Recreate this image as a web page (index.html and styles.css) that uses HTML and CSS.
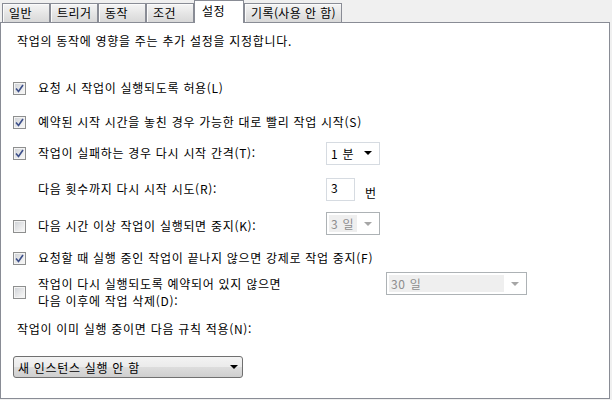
FILE: index.html
```html
<!DOCTYPE html>
<html lang="ko">
<head>
    <meta charset="utf-8">
    <title>작업 속성 - 설정</title>
    <link rel="stylesheet" href="styles.css">
</head>
<body>
    <div class="tabs">
        <div class="tab">일반</div>
        <div class="tab">트리거</div>
        <div class="tab">동작</div>
        <div class="tab">조건</div>
        <div class="tab active">설정</div>
        <div class="tab">기록(사용 안 함)</div>
    </div>

    <div class="panel">
        <p class="desc">작업의 동작에 영향을 주는 추가 설정을 지정합니다.</p>

        <div class="row r1">
            <span class="check on"><svg width="9" height="9" viewBox="0 0 9 9"><path d="M1 4.5 L3.5 7.5 L8 1" fill="none" stroke="#3c4f8a" stroke-width="1.6"/></svg></span>
            <span class="label">요청 시 작업이 실행되도록 허용(L)</span>
        </div>

        <div class="row r2">
            <span class="check on"><svg width="9" height="9" viewBox="0 0 9 9"><path d="M1 4.5 L3.5 7.5 L8 1" fill="none" stroke="#3c4f8a" stroke-width="1.6"/></svg></span>
            <span class="label">예약된 시작 시간을 놓친 경우 가능한 대로 빨리 작업 시작(S)</span>
        </div>

        <div class="row r3">
            <span class="check on"><svg width="9" height="9" viewBox="0 0 9 9"><path d="M1 4.5 L3.5 7.5 L8 1" fill="none" stroke="#3c4f8a" stroke-width="1.6"/></svg></span>
            <span class="label wide">작업이 실패하는 경우 다시 시작 간격(T):</span>
            <div class="combo small">
                <span class="value">1 분</span>
                <span class="arrow"></span>
            </div>
        </div>

        <div class="row r4 indent">
            <span class="label wide">다음 횟수까지 다시 시작 시도(R):</span>
            <div class="textbox">3</div>
            <span class="unit">번</span>
        </div>

        <div class="row r5 bottom">
            <span class="check"></span>
            <span class="label wide">다음 시간 이상 작업이 실행되면 중지(K):</span>
            <div class="combo small disabled">
                <span class="value">3 일</span>
                <span class="arrow"></span>
            </div>
        </div>

        <div class="row r6">
            <span class="check on"><svg width="9" height="9" viewBox="0 0 9 9"><path d="M1 4.5 L3.5 7.5 L8 1" fill="none" stroke="#3c4f8a" stroke-width="1.6"/></svg></span>
            <span class="label">요청할 때 실행 중인 작업이 끝나지 않으면 강제로 작업 중지(F)</span>
        </div>

        <div class="row r7">
            <span class="check"></span>
            <span class="label two-line">작업이 다시 실행되도록 예약되어 있지 않으면<br>다음 이후에 작업 삭제(D):</span>
            <div class="combo large disabled">
                <span class="value">30 일</span>
                <span class="arrow"></span>
            </div>
        </div>

        <div class="row r8">
            <span class="label">작업이 이미 실행 중이면 다음 규칙 적용(N):</span>
        </div>

        <div class="dropdown">
            <span class="value">새 인스턴스 실행 안 함</span>
            <span class="arrow"></span>
        </div>
    </div>
</body>
</html>
```

FILE: styles.css
```css
body {
    margin: 0;
    width: 612px;
    height: 400px;
    background-color: #f0f0f0;
    font-family: "Noto Sans CJK KR", "Noto Sans", sans-serif;
    font-size: 12px;
    letter-spacing: 0.7px;
    color: #000;
    overflow: hidden;
}

/* tab strip */
.tabs {
    display: flex;
    align-items: flex-end;
    height: 22px;
    padding-left: 2px;
}

.tab {
    box-sizing: border-box;
    height: 19px;
    min-width: 48px;
    padding: 0 5px 0 6px;
    border: 1px solid #898c95;
    border-bottom: none;
    background: linear-gradient(#f5f5f5, #e6e6e6 50%, #d8d8d8);
    box-shadow: inset 1px 1px 0 #fbfbfb;
    line-height: 17px;
    letter-spacing: 0.4px;
    white-space: nowrap;
}

.tab.active {
    position: relative;
    z-index: 1;
    height: 23px;
    min-width: 50px;
    margin-bottom: -1px;
    padding-left: 7px;
    background: #fff;
    box-shadow: none;
    line-height: 19px;
}

/* page */
.panel {
    box-sizing: border-box;
    width: 610px;
    height: 377px;
    padding: 6px 0 0 12px;
    border: 1px solid #898c95;
    background-color: #fff;
}

.desc {
    margin: 0;
    height: 24px;
    padding-left: 4px;
    line-height: 24px;
}

.row {
    display: flex;
    align-items: center;
    height: 24px;
}

.row.bottom {
    align-items: flex-end;
}

.r1 { margin-top: 23px; }
.r2 { margin-top: 10px; }
.r3 { margin-top: 7px; }
.r4 { margin-top: 12px; }
.r5 { margin-top: 10px; }
.r6 { margin-top: 11px; }
.r7 { margin-top: 2px; height: 40px; }
.r8 { margin-top: 5px; padding-left: 4px; }

.indent {
    padding-left: 25px;
}

.label {
    line-height: 16px;
    white-space: nowrap;
}

.label.wide {
    width: 288px;
}

.label.two-line {
    width: 348px;
    line-height: 17px;
}

.row.bottom .label {
    margin-bottom: 1px;
}

/* checkbox */
.check {
    box-sizing: border-box;
    display: flex;
    align-items: center;
    justify-content: center;
    flex-shrink: 0;
    width: 13px;
    height: 13px;
    margin-right: 12px;
    border: 1px solid #8e8f8f;
    background: linear-gradient(135deg, #cdd0d5, #f3f3f3 80%);
    box-shadow: inset 0 0 0 1px #f4f4f4;
}

.row.bottom .check {
    margin-bottom: 2px;
}

/* combo boxes */
.combo {
    box-sizing: border-box;
    display: flex;
    align-items: center;
    height: 23px;
    padding: 2px;
    border: 1px solid #d6dbe1;
    background: #fff;
}

.combo.small {
    width: 54px;
}

.combo.large {
    width: 141px;
    align-self: flex-start;
}

.combo .value {
    flex: 1;
    height: 17px;
    padding-left: 2px;
    line-height: 17px;
}

.combo .arrow {
    width: 0;
    height: 0;
    margin: 0 5px 0 7px;
    border-left: 4px solid transparent;
    border-right: 4px solid transparent;
    border-top: 4px solid #000;
}

.combo.disabled {
    border-color: #adb2b5;
    color: #8d8d8d;
}

.combo.disabled .value {
    background-color: #efefef;
}

.combo.disabled .arrow {
    border-top-color: #a6a6a6;
}

.textbox {
    box-sizing: border-box;
    width: 29px;
    height: 23px;
    padding: 2px 0 0 4px;
    border: 1px solid #d6dbe1;
    line-height: 14px;
}

.unit {
    align-self: flex-end;
    margin-left: 10px;
    line-height: 16px;
}

/* bottom dropdown */
.dropdown {
    box-sizing: border-box;
    display: flex;
    align-items: center;
    justify-content: space-between;
    width: 230px;
    height: 22px;
    margin-top: 15px;
    padding: 0 4px;
    border: 1px solid #707070;
    border-radius: 3px;
    background: linear-gradient(#f3f3f3, #ebebeb 50%, #dddddd 50%, #cfcfcf);
}

.dropdown .arrow {
    width: 0;
    height: 0;
    border-left: 4px solid transparent;
    border-right: 4px solid transparent;
    border-top: 4px solid #000;
}
```
